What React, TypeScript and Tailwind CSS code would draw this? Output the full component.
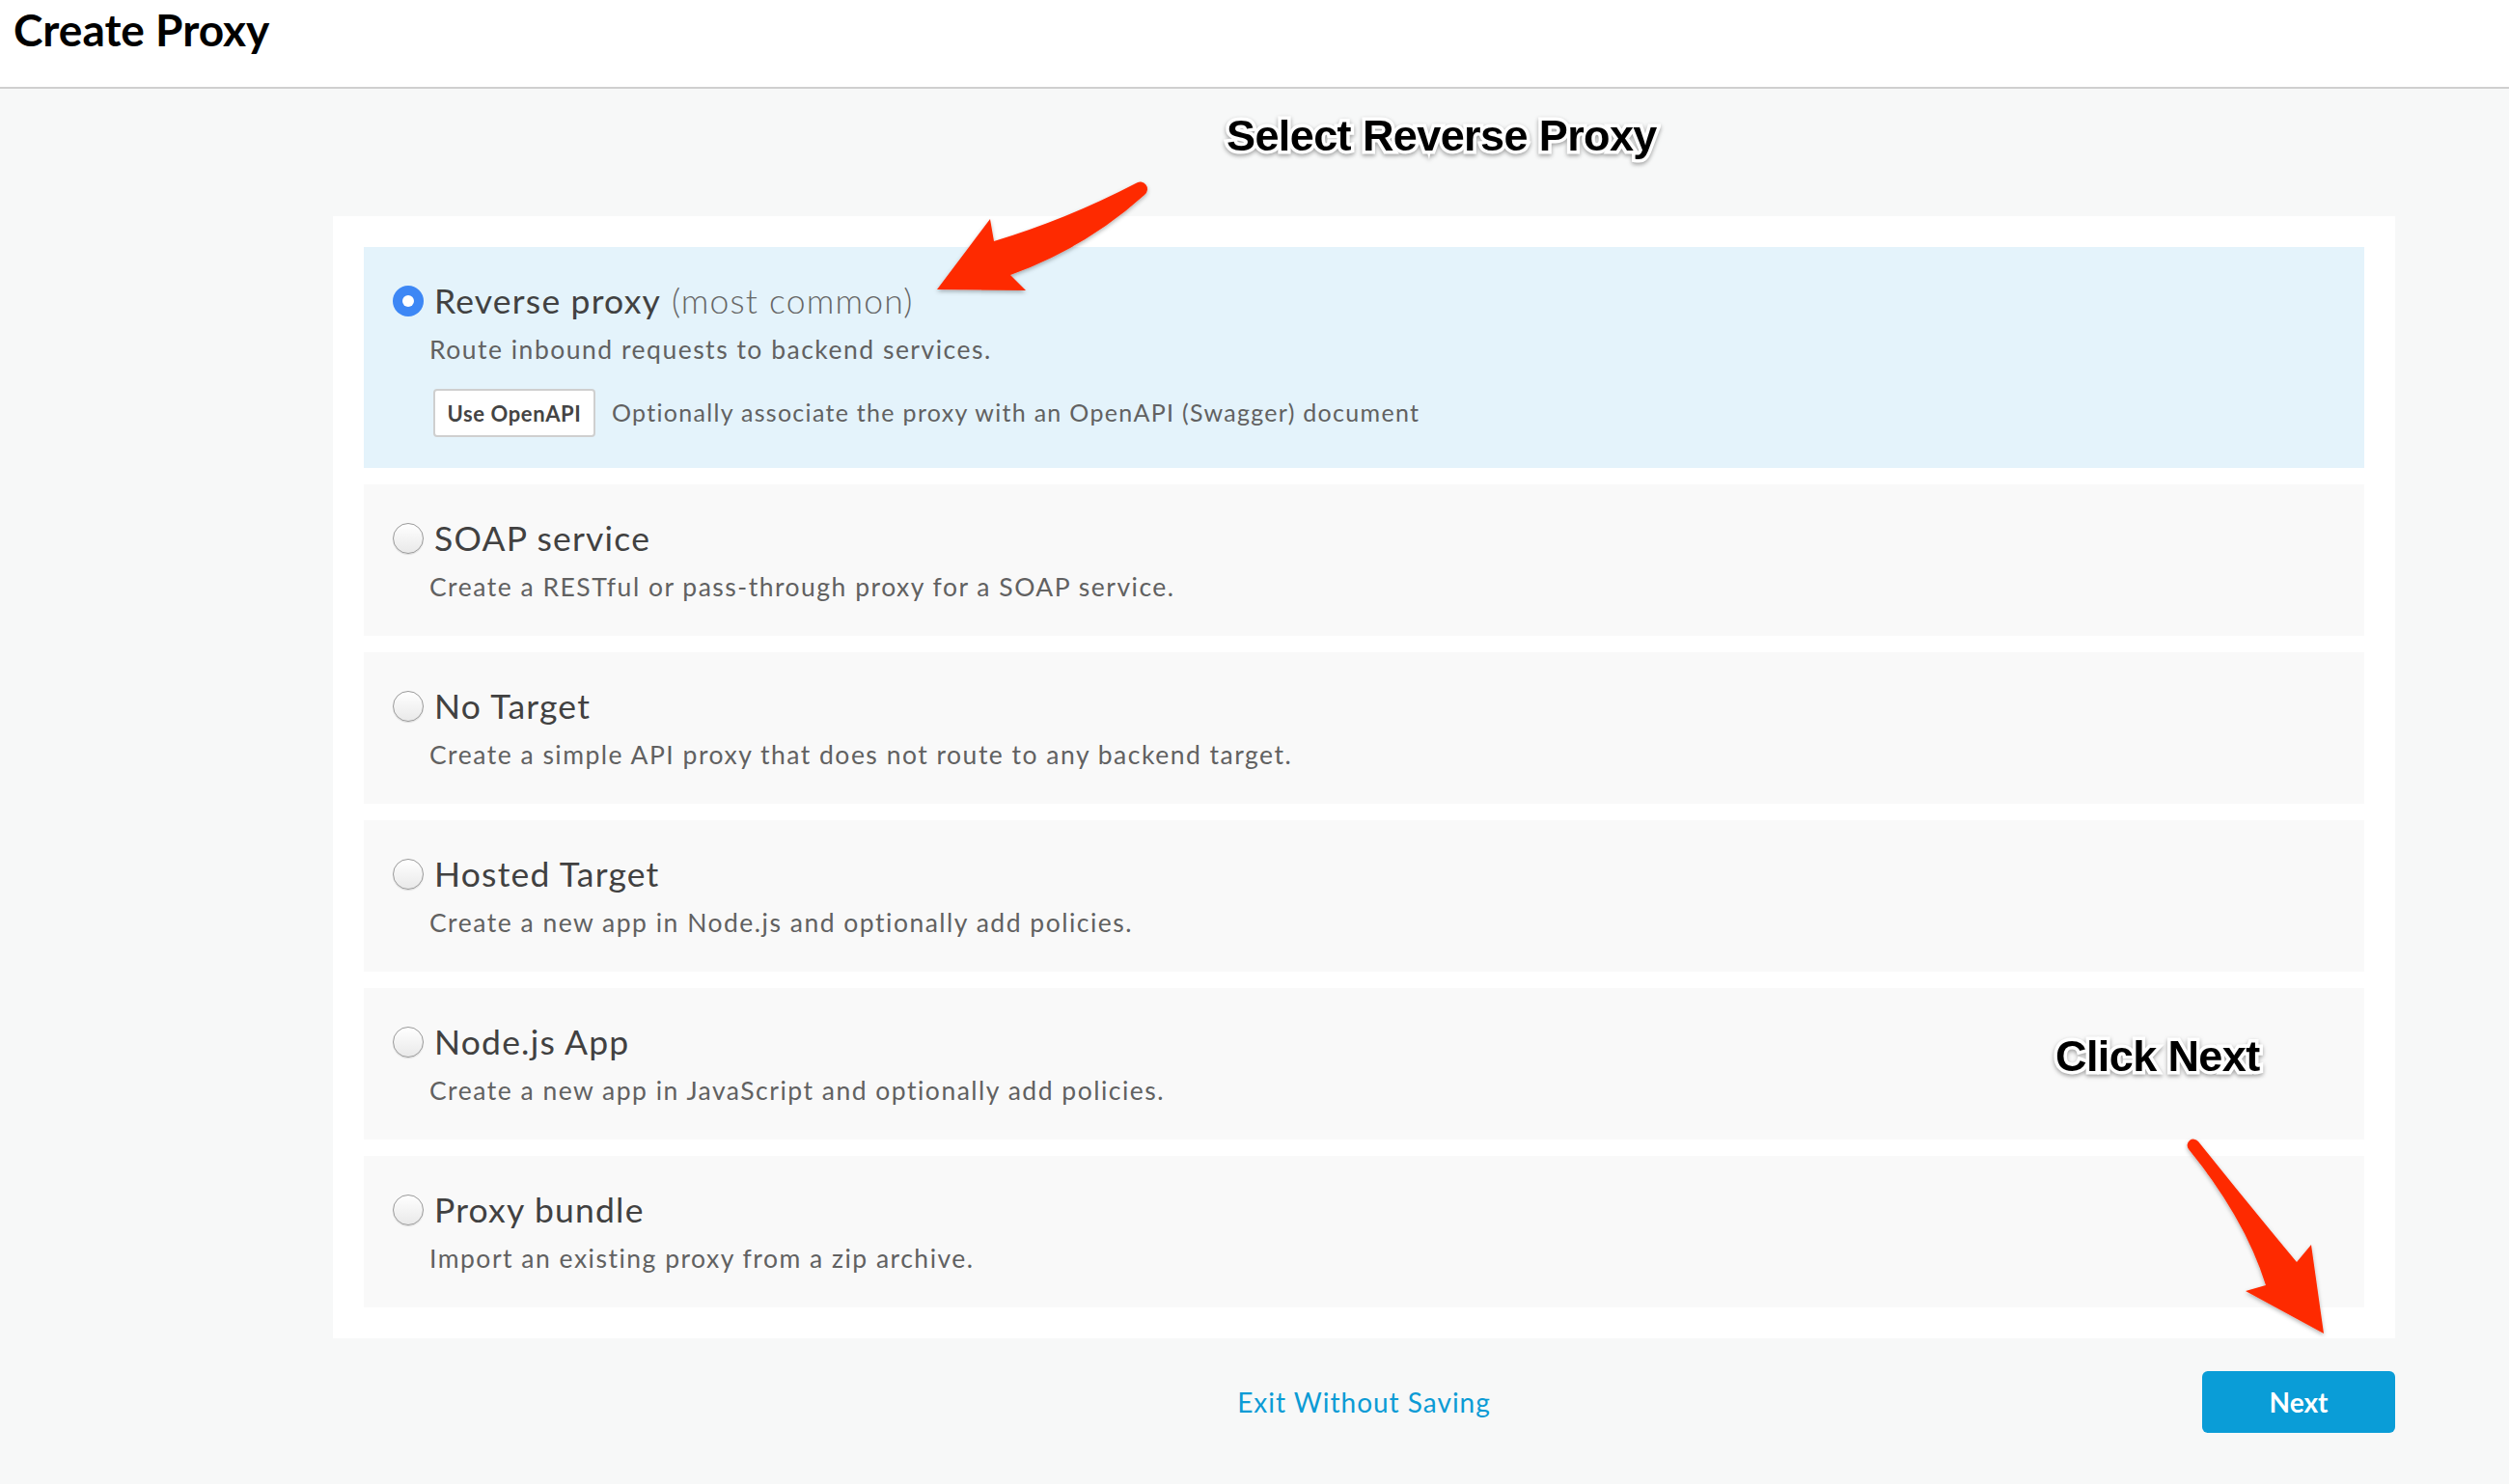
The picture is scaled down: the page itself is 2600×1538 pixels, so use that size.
import React from "react";

type Opt = { title: string; extra?: string; desc: string; selected?: boolean; openapi?: boolean };

const options: Opt[] = [
  { title: "Reverse proxy", extra: "(most common)", desc: "Route inbound requests to backend services.", selected: true, openapi: true },
  { title: "SOAP service", desc: "Create a RESTful or pass-through proxy for a SOAP service." },
  { title: "No Target", desc: "Create a simple API proxy that does not route to any backend target." },
  { title: "Hosted Target", desc: "Create a new app in Node.js and optionally add policies." },
  { title: "Node.js App", desc: "Create a new app in JavaScript and optionally add policies." },
  { title: "Proxy bundle", desc: "Import an existing proxy from a zip archive." },
];

function Radio({ on }: { on?: boolean }) {
  if (on) {
    return (
      <span className="flex h-[32px] w-[32px] shrink-0 items-center justify-center rounded-full bg-[#3d87f5]">
        <span className="h-[12px] w-[12px] rounded-full bg-white" />
      </span>
    );
  }
  return (
    <span className="h-[32px] w-[32px] shrink-0 rounded-full border-[1.5px] border-[#9a9a9a] bg-linear-to-b from-white to-[#e9e9e9] shadow-[0_1px_1px_rgba(0,0,0,0.12)]" />
  );
}

function Card({ o }: { o: Opt }) {
  return (
    <div
      className={
        o.selected
          ? "flex flex-col bg-[#e4f3fb] pl-[30px] pt-[35px] pb-[32px]"
          : "flex h-[157px] flex-col bg-[#f9f9f9] pl-[30px] pt-[35px]"
      }
    >
      <div className="flex items-center gap-[11px]">
        <Radio on={o.selected} />
        <div className="text-[35.5px] leading-[42px] tracking-[1.2px] text-[#414141]">
          {o.title}
          {o.extra && <span className="font-light text-[#666]"> {o.extra}</span>}
        </div>
      </div>
      <div className="ml-[38px] mt-[13px] text-[26.5px] leading-[32px] tracking-[1.5px] text-[#616161]">{o.desc}</div>
      {o.openapi && (
        <div className="ml-[42px] mt-[25px] flex items-center gap-[17px]">
          <button className="flex h-[50px] w-[168px] items-center justify-center rounded-[4px] border-2 border-[#cfcfcf] bg-white text-[22px] font-bold tracking-[0.6px] text-[#444]">
            Use OpenAPI
          </button>
          <span className="text-[25px] tracking-[1.3px] text-[#616161]">
            Optionally associate the proxy with an OpenAPI (Swagger) document
          </span>
        </div>
      )}
    </div>
  );
}

const annot =
  "absolute text-[45px] leading-[45px] font-bold tracking-[-0.6px] text-black whitespace-nowrap [font-family:'Liberation_Sans',Arial,sans-serif] [-webkit-text-stroke:7px_white] [paint-order:stroke_fill] [filter:drop-shadow(0_2px_2px_rgba(0,0,0,0.35))]";

export default function App() {
  return (
    <div className="relative min-h-[1538px] w-full bg-[#f7f8f8] [font-family:Lato,sans-serif]">
      <header className="h-[92px] border-b-2 border-[#cfcfcf] bg-white pl-[14px] pt-[6px]">
        <h1 className="text-[46px] font-bold leading-[50px] text-black">Create Proxy</h1>
      </header>

      <main className="ml-[345px] w-[2137px] pt-[132px]">
        <div className="flex flex-col gap-[17px] bg-white p-[32px]">
          {options.map((o) => (
            <Card key={o.title} o={o} />
          ))}
        </div>

        <div className="mt-[34px] grid h-[64px] grid-cols-3 items-center">
          <div />
          <div className="flex justify-center">
            <a className="text-[28px] tracking-[1px] text-[#0b9bd5]">Exit Without Saving</a>
          </div>
          <div className="flex justify-end">
            <button className="h-[64px] w-[200px] rounded-[6px] bg-[#0a9dd7] text-[28px] font-bold text-white">
              Next
            </button>
          </div>
        </div>
      </main>

      <div className={annot + " left-[1271px] top-[118px]"}>Select Reverse Proxy</div>
      <div className={annot + " left-[2130px] top-[1072px]"}>Click Next</div>

      <svg className="pointer-events-none absolute left-0 top-0" width="2600" height="1538">
        <defs>
          <filter id="sh" x="-10%" y="-10%" width="120%" height="120%">
            <feDropShadow dx="0" dy="2" stdDeviation="2" floodColor="#000" floodOpacity="0.3" />
          </filter>
        </defs>
        <path
          filter="url(#sh)"
          fill="#fe2b02"
          d="M 1177 190 Q 1106 227 1030 250 L 1026 227 L 971 300 L 1063 301 L 1047 285 Q 1125 257 1186 202 A 6 6 0 0 0 1177 190 Z"
        />
        <path
          filter="url(#sh)"
          fill="#fe2b02"
          d="M 2268 1191 Q 2326 1262 2348 1332 L 2327 1338 L 2408 1382 L 2395 1290 L 2380 1308 Q 2330 1248 2278 1183 A 6 6 0 0 0 2268 1191 Z"
        />
      </svg>
    </div>
  );
}
